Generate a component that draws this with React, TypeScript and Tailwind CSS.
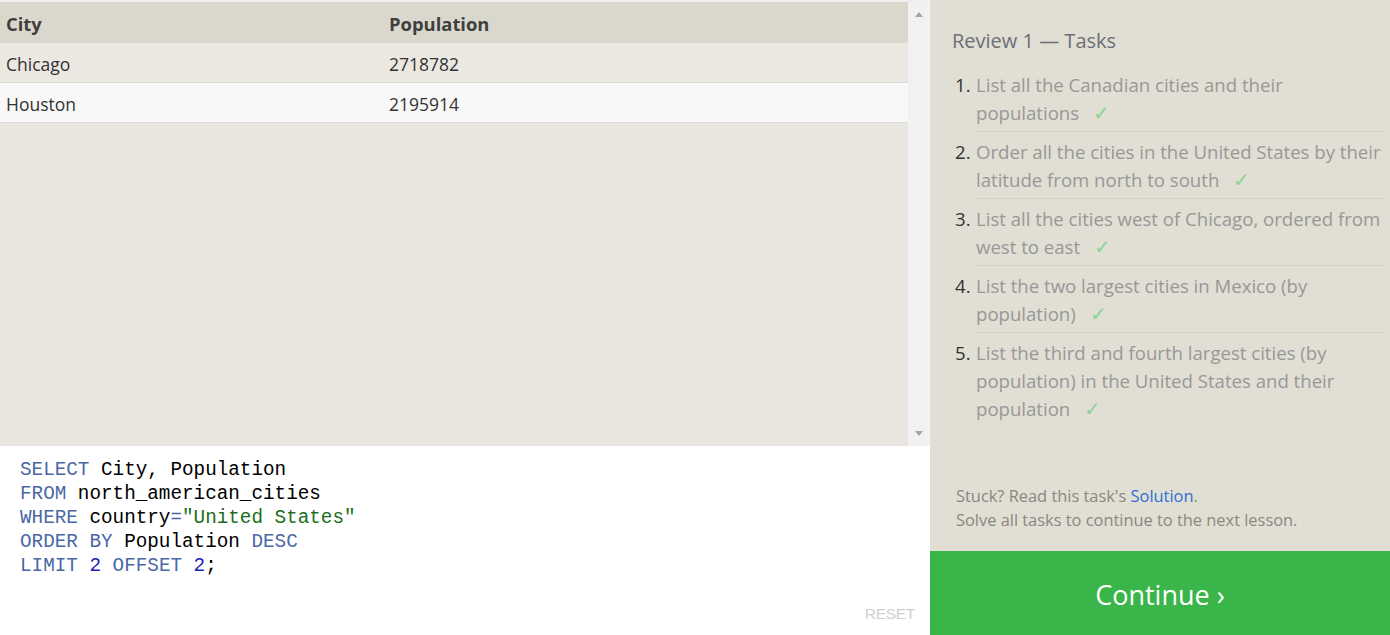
import React from "react";

const rows = [
  { city: "Chicago", pop: "2718782" },
  { city: "Houston", pop: "2195914" },
];

const tasks = [
  "List all the Canadian cities and their populations",
  "Order all the cities in the United States by their latitude from north to south",
  "List all the cities west of Chicago, ordered from west to east",
  "List the two largest cities in Mexico (by population)",
  "List the third and fourth largest cities (by population) in the United States and their population",
];

function Kw({ children }: { children: React.ReactNode }) {
  return <span className="text-[#4a67a5]">{children}</span>;
}

export default function App() {
  return (
    <div className="flex h-[635px] w-[1390px] overflow-hidden font-['Open_Sans',sans-serif]">
      {/* left: results + editor */}
      <div className="flex w-[930px] flex-col">
        <div className="flex h-[446px] border-t-2 border-[#efefef] bg-[#e8e6df]">
          <div className="flex-1">
            <div className="flex h-[41px] items-center bg-[#dad8cc] pt-[3px] text-[18.4px] font-bold text-[#3f3f3f]">
              <div className="w-[389px] pl-[6px]">City</div>
              <div>Population</div>
            </div>
            {rows.map((r, i) => (
              <div
                key={r.city}
                className={`flex h-[40px] items-center border-b border-[#dcdcd8] pt-[3px] text-[17.5px] text-[#333] ${
                  i % 2 === 0 ? "bg-[#eae8e1]" : "bg-[#f8f8f8]"
                }`}
              >
                <div className="w-[389px] pl-[6px]">{r.city}</div>
                <div>{r.pop}</div>
              </div>
            ))}
          </div>
          <div className="flex w-[22px] flex-col items-center justify-between border-r border-[#f5f5f5] bg-[#f1f1f1] py-[10px]">
            <div className="h-0 w-0 border-x-[4px] border-b-[5px] border-x-transparent border-b-[#a3a3a3]" />
            <div className="h-0 w-0 border-x-[4px] border-t-[5px] border-x-transparent border-t-[#a3a3a3]" />
          </div>
        </div>
        <div className="relative flex-1 bg-white px-[20px] pt-[12px] font-['Liberation_Mono',monospace] text-[19.3px] leading-[24px] text-black">
          <div>
            <Kw>SELECT</Kw> City, Population
          </div>
          <div>
            <Kw>FROM</Kw> north_american_cities
          </div>
          <div>
            <Kw>WHERE</Kw> country<Kw>=</Kw>
            <span className="text-[#1a6e1a]">"United States"</span>
          </div>
          <div>
            <Kw>ORDER BY</Kw> Population <Kw>DESC</Kw>
          </div>
          <div>
            <Kw>LIMIT</Kw> <span className="text-[#2020b8]">2</span> <Kw>OFFSET</Kw>{" "}
            <span className="text-[#2020b8]">2</span>;
          </div>
          <button className="absolute bottom-[9px] right-[15px] font-['Liberation_Sans',sans-serif] text-[15.5px] tracking-[-0.3px] text-[#cfcfcf]">
            RESET
          </button>
        </div>
      </div>

      {/* right: tasks */}
      <div className="flex flex-1 flex-col bg-[#e1ded3]">
        <div className="flex-1 pl-[22px] pr-[5px] pt-[27px]">
          <h2 className="text-[20px] leading-[28px] text-[#6a6f78]">Review 1 — Tasks</h2>
          <ol className="mt-[16px] pl-[3px]">
            {tasks.map((t, i) => (
              <li key={i} className="flex text-[18.6px] leading-[28px]">
                <span className="w-[21px] shrink-0 text-[#333]">{i + 1}.</span>
                <div
                  className={`flex-1 pb-[4px] text-[#989898] ${
                    i < tasks.length - 1 ? "mb-[6px] border-b border-[#d3d0c6]" : ""
                  }`}
                >
                  {t}
                  <span className="ml-[14px] text-[20px] leading-[20px] text-[#8ed494]">✓</span>
                </div>
              </li>
            ))}
          </ol>
        </div>
        <div className="px-[26px] pb-[19px] text-[16.4px] leading-[24px] text-[#8c8782]">
          <div>
            Stuck? Read this task's <span className="text-[#2f6fd6]">Solution</span>.
          </div>
          <div>Solve all tasks to continue to the next lesson.</div>
        </div>
        <button className="flex h-[84px] items-center justify-center bg-[#3ab54a] pt-[4px] text-[27px] text-white">
          Continue ›
        </button>
      </div>
    </div>
  );
}
